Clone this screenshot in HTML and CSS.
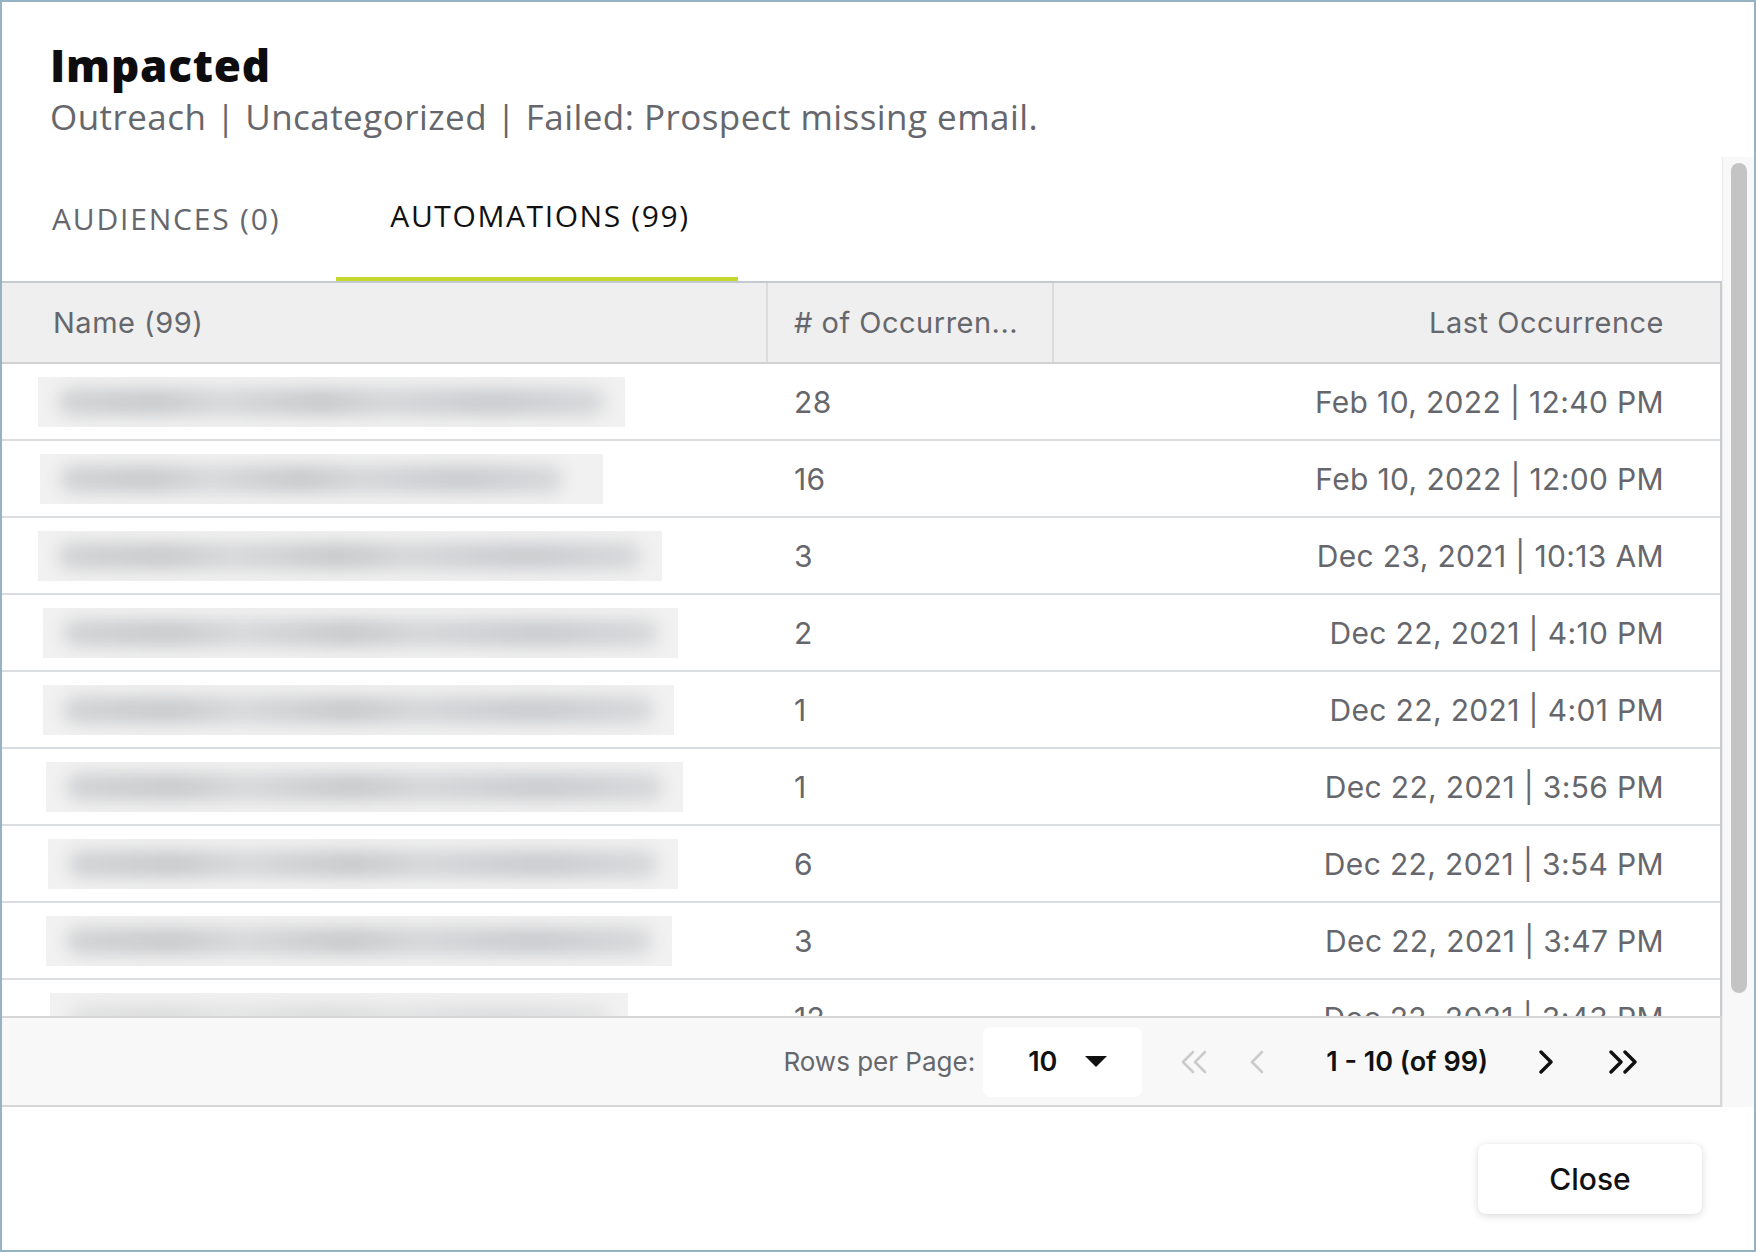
FILE: index.html
```html
<!DOCTYPE html>
<html lang="en">
<head>
<meta charset="utf-8">
<title>Impacted</title>
<link rel="stylesheet" href="styles.css">
</head>
<body>
<div class="frame">
  <header class="head">
    <h1 class="title">Impacted</h1>
    <p class="subtitle">Outreach | Uncategorized | Failed: Prospect missing email.</p>
  </header>

  <div class="body">
    <div class="main">
      <div class="clip">
        <nav class="tabs">
          <div class="tab">AUDIENCES (0)</div>
          <div class="tab active">AUTOMATIONS (99)</div>
        </nav>

        <div class="table">
          <div class="row thead">
            <div class="cell c-name">Name (99)</div>
            <div class="cell c-num"># of Occurren...</div>
            <div class="cell c-last">Last Occurrence</div>
          </div>

          <div class="row">
            <div class="cell c-name"><div class="blur" style="width:587px;margin-left:0px"><span class="ink"></span></div></div>
            <div class="cell c-num">28</div>
            <div class="cell c-last">Feb 10, 2022 | 12:40 PM</div>
          </div>
          <div class="row">
            <div class="cell c-name"><div class="blur" style="width:563px;margin-left:2px"><span class="ink short"></span></div></div>
            <div class="cell c-num">16</div>
            <div class="cell c-last">Feb 10, 2022 | 12:00 PM</div>
          </div>
          <div class="row">
            <div class="cell c-name"><div class="blur" style="width:624px;margin-left:0px"><span class="ink"></span></div></div>
            <div class="cell c-num">3</div>
            <div class="cell c-last">Dec 23, 2021 | 10:13 AM</div>
          </div>
          <div class="row">
            <div class="cell c-name"><div class="blur" style="width:635px;margin-left:5px"><span class="ink"></span></div></div>
            <div class="cell c-num">2</div>
            <div class="cell c-last">Dec 22, 2021 | 4:10 PM</div>
          </div>
          <div class="row">
            <div class="cell c-name"><div class="blur" style="width:631px;margin-left:5px"><span class="ink"></span></div></div>
            <div class="cell c-num">1</div>
            <div class="cell c-last">Dec 22, 2021 | 4:01 PM</div>
          </div>
          <div class="row">
            <div class="cell c-name"><div class="blur" style="width:637px;margin-left:8px"><span class="ink"></span></div></div>
            <div class="cell c-num">1</div>
            <div class="cell c-last">Dec 22, 2021 | 3:56 PM</div>
          </div>
          <div class="row">
            <div class="cell c-name"><div class="blur" style="width:630px;margin-left:10px"><span class="ink"></span></div></div>
            <div class="cell c-num">6</div>
            <div class="cell c-last">Dec 22, 2021 | 3:54 PM</div>
          </div>
          <div class="row">
            <div class="cell c-name"><div class="blur" style="width:626px;margin-left:8px"><span class="ink"></span></div></div>
            <div class="cell c-num">3</div>
            <div class="cell c-last">Dec 22, 2021 | 3:47 PM</div>
          </div>
          <div class="row">
            <div class="cell c-name"><div class="blur" style="width:578px;margin-left:12px"><span class="ink light"></span></div></div>
            <div class="cell c-num">12</div>
            <div class="cell c-last">Dec 22, 2021 | 3:43 PM</div>
          </div>
        </div>
      </div>

      <footer class="pager">
        <span class="pager-label">Rows per Page:</span>
        <div class="select">
          <span class="select-value">10</span>
          <svg class="caret" width="22" height="11" viewBox="0 0 22 11"><path d="M0 0 H22 L11 11 Z" fill="#111"/></svg>
        </div>
        <svg class="pg first" width="30" height="24" viewBox="0 0 30 24"><path d="M14 2 L4 12 L14 22 M26 2 L16 12 L26 22" fill="none" stroke="#cbcbcb" stroke-width="2.6" stroke-linecap="round" stroke-linejoin="round"/></svg>
        <svg class="pg prev" width="16" height="24" viewBox="0 0 16 24"><path d="M13 2 L3 12 L13 22" fill="none" stroke="#cbcbcb" stroke-width="2.6" stroke-linecap="round" stroke-linejoin="round"/></svg>
        <span class="pager-range">1 - 10 (of 99)</span>
        <svg class="pg next" width="16" height="24" viewBox="0 0 16 24"><path d="M3 2 L13 12 L3 22" fill="none" stroke="#111" stroke-width="3.4" stroke-linecap="round" stroke-linejoin="round"/></svg>
        <svg class="pg last" width="32" height="24" viewBox="0 0 32 24"><path d="M3 2 L13 12 L3 22 M17 2 L27 12 L17 22" fill="none" stroke="#111" stroke-width="3.4" stroke-linecap="round" stroke-linejoin="round"/></svg>
      </footer>
    </div>

    <div class="scrollbar"><div class="thumb"></div></div>
  </div>

  <div class="actions">
    <button class="btn-close" type="button">Close</button>
  </div>
</div>
</body>
</html>
```

FILE: styles.css
```css
* { box-sizing: border-box; }

html, body {
  margin: 0;
  padding: 0;
  background: #ffffff;
}

.frame {
  width: 1756px;
  height: 1252px;
  border: 2px solid #96b3c3;
  background: #ffffff;
  display: flex;
  flex-direction: column;
  overflow: hidden;
}

/* ---------- heading ---------- */
.head {
  height: 155px;
  padding: 36px 0 0 48px;
  flex: none;
}

.title {
  margin: 0;
  font-family: "Open Sans", "Lato", sans-serif;
  font-weight: 800;
  font-size: 44px;
  line-height: 54px;
  letter-spacing: 0.8px;
  color: #0d0d0f;
}

.subtitle {
  margin: 4px 0 0;
  font-family: "Open Sans", "Lato", sans-serif;
  font-weight: 400;
  font-size: 35px;
  line-height: 42px;
  letter-spacing: 0.45px;
  color: #66676c;
}

/* ---------- body / scroll area ---------- */
.body {
  height: 950px;
  flex: none;
  display: flex;
}

.main {
  width: 1720px;
  display: flex;
  flex-direction: column;
}

.clip {
  flex: 1;
  overflow: hidden;
}

.scrollbar {
  width: 32px;
  background: #f8f8f8;
  border-left: 1px solid #ececec;
  padding: 6px 0 0 8px;
}

.thumb {
  width: 16px;
  height: 830px;
  border-radius: 8px;
  background: #c4c4c4;
}

/* ---------- tabs ---------- */
.tabs {
  height: 124px;
  display: flex;
  align-items: flex-end;
}

.tab {
  padding: 0 56px 40px 50px;
  border-bottom: 4px solid transparent;
  font-family: "Open Sans", "Lato", sans-serif;
  font-size: 30px;
  line-height: 36px;
  letter-spacing: 1.8px;
  color: #66676c;
}

.tab.active {
  padding: 0 48px 43px 54px;
  color: #111111;
  letter-spacing: 1.6px;
  border-bottom-color: #c3d92e;
}

/* ---------- table ---------- */
.table {
  border-top: 2px solid #c4cacf;
  border-right: 2px solid #c9cdd1;
}

.row {
  display: grid;
  grid-template-columns: 764px 286px 1fr;
  height: 77px;
  border-bottom: 2px solid #d9dde0;
  font-family: "Inter", "Roboto", sans-serif;
  font-size: 30px;
  letter-spacing: 0.35px;
  color: #66676c;
}

.row.thead {
  height: 81px;
  background: #efefef;
  border-bottom: 2px solid #d2d2d2;
  font-size: 29px;
  letter-spacing: 0.5px;
}

.cell {
  display: flex;
  align-items: center;
  white-space: nowrap;
  overflow: hidden;
}

.c-name { padding-left: 36px; }
.thead .c-name { padding-left: 51px; }

.c-num { padding-left: 28px; }
.c-last { justify-content: flex-end; padding-right: 56px; }

.thead .c-num,
.thead .c-last { border-left: 2px solid #d8dcdf; }
.thead .c-num { padding-left: 26px; }

/* blurred name placeholder */
.blur {
  height: 50px;
  background: #f1f1f1;
  overflow: hidden;
  display: flex;
  align-items: center;
}

.ink {
  display: block;
  height: 28px;
  margin: 0 20px;
  flex: 1;
  border-radius: 14px;
  background: linear-gradient(90deg, #d3d4d6 0%, #cacbcd 18%, #d8d9db 30%, #c9cacc 48%, #d6d7d9 60%, #cbcccf 80%, #d8d9db 100%);
  filter: blur(8px);
}

.ink.short { margin-right: 40px; }
.ink.light { opacity: 0.5; }

/* ---------- pager ---------- */
.pager {
  height: 91px;
  flex: none;
  background: #f8f8f8;
  border-top: 2px solid #d6d6d6;
  border-bottom: 2px solid #d6d6d6;
  border-right: 2px solid #d6d6d6;
  display: flex;
  align-items: center;
  justify-content: flex-end;
  padding-right: 80px;
  font-family: "Inter", "Roboto", sans-serif;
  font-size: 27px;
}

.pager-label {
  color: #66676c;
  font-size: 26px;
  letter-spacing: 0;
}

.select {
  width: 159px;
  height: 70px;
  margin-left: 8px;
  background: #ffffff;
  border-radius: 8px;
  display: flex;
  align-items: center;
  padding-left: 45px;
}

.select-value {
  font-weight: 600;
  color: #111111;
}

.caret { margin-left: 28px; }

.pg { display: block; flex: none; }
.pg.first { margin-left: 37px; }
.pg.prev { margin-left: 40px; }
.pager-range {
  margin-left: 61px;
  font-weight: 600;
  color: #111111;
}
.pg.next { margin-left: 50px; }
.pg.last { margin-left: 54px; }

/* ---------- bottom actions ---------- */
.actions {
  flex: 1;
  display: flex;
  align-items: center;
  justify-content: flex-end;
  padding-right: 52px;
}

.btn-close {
  width: 224px;
  height: 70px;
  border: none;
  border-radius: 8px;
  background: #ffffff;
  box-shadow: 0 2px 8px rgba(0, 0, 0, 0.14), 0 0 1px rgba(0, 0, 0, 0.08);
  font-family: "Inter", "Roboto", sans-serif;
  font-size: 30px;
  font-weight: 500;
  color: #111111;
  cursor: pointer;
}
```
